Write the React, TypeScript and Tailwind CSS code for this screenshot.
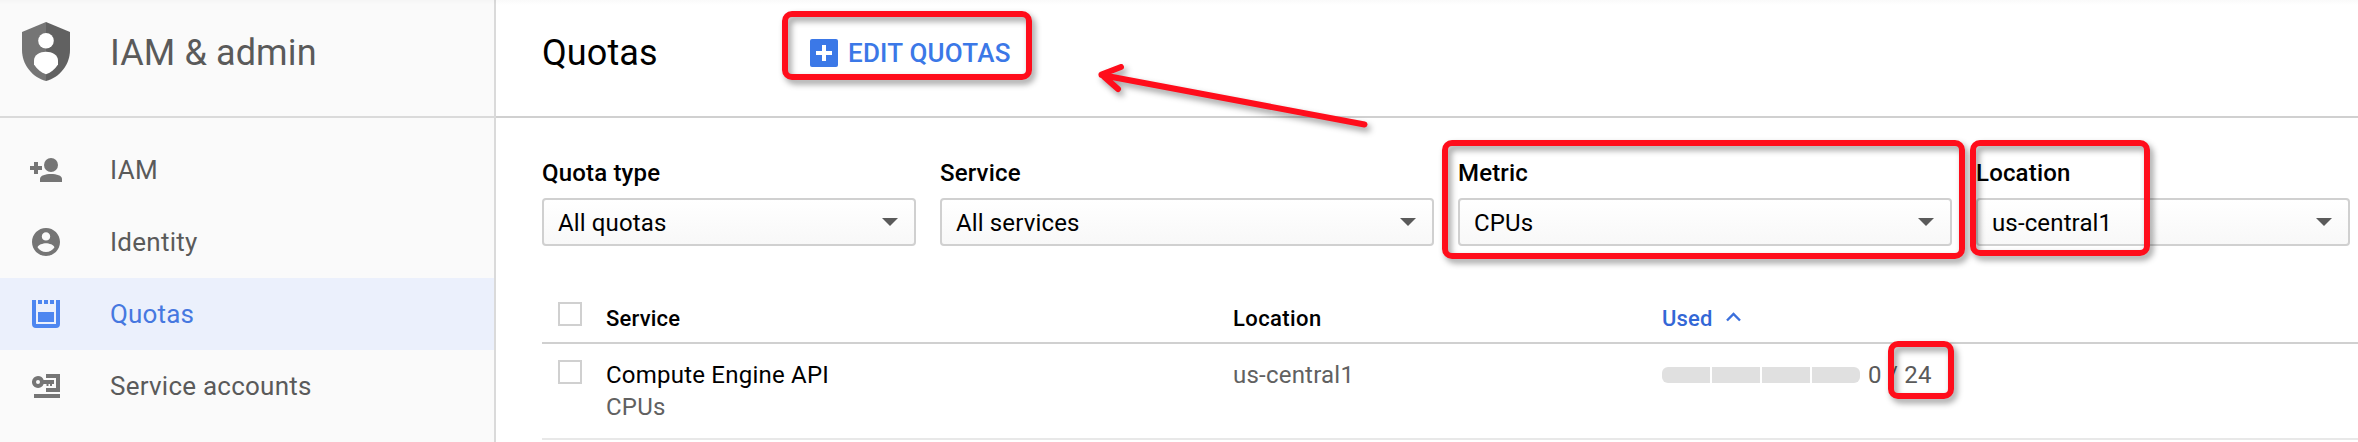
import React from "react";
import type { ReactNode } from "react";

function ShieldIcon() {
  return (
    <svg width="48" height="59" viewBox="0 0 48 59">
      <path d="M24 0 0 10V28C0 42.500 10.200 55.400 24 59Z" fill="#757575" />
      <path d="M24 0 48 10V28C48 42.500 37.800 55.400 24 59Z" fill="#616161" />
      <circle cx="24" cy="18.700" r="7.800" fill="#fff" />
      <path d="M24 29.700C18 29.700 12 32.500 12 38.500V42.500C15 47 19 50.500 24 52.300C29 50.500 33 47 36 42.500V38.500C36 32.500 30 29.700 24 29.700Z" fill="#fff" />
    </svg>
  );
}

function PersonAddIcon() {
  return (
    <svg width="32" height="24" viewBox="0 0 32 24" fill="#757575">
      <path d="M4 4H8V8H12V12H8V16H4V12H0V8H4Z" />
      <circle cx="21" cy="7" r="7" />
      <path d="M10 24V21C10 17.400 15.500 16 21 16S32 17.400 32 21V24Z" />
    </svg>
  );
}

function AccountIcon() {
  return (
    <svg width="28" height="28" viewBox="2 2 20 20" fill="#757575">
      <path d="M12 2C6.480 2 2 6.480 2 12s4.480 10 10 10 10-4.480 10-10S17.520 2 12 2zm0 3c1.660 0 3 1.340 3 3s-1.340 3-3 3-3-1.340-3-3 1.340-3 3-3zm0 14.200c-2.500 0-4.710-1.280-6-3.220.03-1.990 4-3.080 6-3.080 1.990 0 5.970 1.090 6 3.080-1.290 1.940-3.500 3.220-6 3.220z" />
    </svg>
  );
}

function QuotaIcon() {
  return (
    <svg width="28" height="28" viewBox="0 0 28 28" fill="#4d86f0">
      <path d="M0 0H4V24H24V0H28V24A4 4 0 0 1 24 28H4A4 4 0 0 1 0 24Z" />
      <path d="M6 0h4v4H6zM12 0h4v4h-4zM18 0h4v4h-4zM6 12h16v10H6z" />
    </svg>
  );
}

function ServiceAccountIcon() {
  return (
    <svg width="28" height="24" viewBox="0 0 28 24" fill="#757575">
      <path d="M14 0H28V18H14V14H24V4H14Z" />
      <path d="M2 20H28V24H2Z" />
      <path
        fillRule="evenodd"
        d="M6 2A6 6 0 0 1 11.650 6H22V10H20V12H18V10H16.500V12H14.500V10H11.650A6 6 0 1 1 6 2ZM6 6A2 2 0 1 0 6 10A2 2 0 1 0 6 6Z"
      />
    </svg>
  );
}

function NavItem({ icon, label, active, spacing }: { icon: ReactNode; label: string; active?: boolean; spacing: string }) {
  return (
    <li className={`flex h-[72px] items-center ${active ? "bg-[#ebf0fc] text-[#4678e0]" : "text-[#5a5a5a]"}`}>
      <span className="flex w-[92px] shrink-0 justify-center">{icon}</span>
      <span className={`ml-[18px] text-[26px] leading-[30px] whitespace-nowrap ${spacing}`}>{label}</span>
    </li>
  );
}

function Filter({ label, value, width, children }: { label: string; value: string; width: string; children?: ReactNode }) {
  return (
    <div className={`relative shrink-0 ${width}`}>
      <div className="text-[24px] leading-[28px] font-medium tracking-[0.17px]">{label}</div>
      <div className="mt-[11px] flex h-12 items-center justify-between rounded-[4px] border-2 border-[#d0d0d0] bg-linear-to-b from-white to-[#f8f8f8] pr-4 pl-[14px]">
        <span className="pt-[2px] text-[24px] leading-[28px] tracking-[0.14px]">{value}</span>
        <svg width="16" height="8" viewBox="0 0 16 8">
          <path d="M0 0H16L8 8Z" fill="#5a5a5a" />
        </svg>
      </div>
      {children}
    </div>
  );
}

function Checkbox() {
  return <span className="block size-6 border-2 border-[#d0d0d0] bg-white" />;
}

function Highlight({ place }: { place: string }) {
  return (
    <div
      className={`pointer-events-none absolute z-10 rounded-[10px] border-6 border-[#ff0d1b] drop-shadow-[3px_4px_3px_rgba(0,0,0,0.4)] ${place}`}
    />
  );
}

export default function App() {
  return (
    <div className="relative flex h-[442px] w-[2358px] overflow-hidden bg-white font-[Roboto,sans-serif] text-black">
      <aside className="w-[496px] shrink-0 border-r-2 border-[#dadada] bg-[#fafafa]">
        <div className="flex h-[118px] items-center border-b-2 border-[#dadada] pb-[10px] text-[#5a5a5a]">
          <span className="-mt-[3px] flex w-[92px] shrink-0 justify-center">
            <ShieldIcon />
          </span>
          <span className="ml-[18px] text-[36px] leading-[42px] tracking-[0.12px]">IAM &amp; admin</span>
        </div>
        <ul className="pt-4">
          <NavItem icon={<PersonAddIcon />} label="IAM" spacing="tracking-[0.4px]" />
          <NavItem icon={<AccountIcon />} label="Identity" spacing="tracking-[0.25px]" />
          <NavItem icon={<QuotaIcon />} label="Quotas" active spacing="tracking-[0.16px]" />
          <NavItem icon={<ServiceAccountIcon />} label="Service accounts" spacing="tracking-[0.24px]" />
        </ul>
      </aside>

      <main className="min-w-0 flex-1">
        <header className="flex h-[118px] items-center border-b-2 border-[#d0d0d0] pb-[10px] pl-[46px]">
          <h1 className="w-[268px] text-[36px] leading-[42px] tracking-[0.1px]">Quotas</h1>
          <div className="flex items-center text-[#3b78e7]">
            <svg width="28" height="28" viewBox="0 0 28 28">
              <rect width="28" height="28" rx="2" fill="#3b78e7" />
              <path d="M12 6h4v6h6v4h-6v6h-4v-6H6v-4h6z" fill="#fff" />
            </svg>
            <span className="ml-[10px] text-[26px] leading-[30px] font-medium tracking-[0.22px]">EDIT QUOTAS</span>
          </div>
        </header>

        <section className="flex gap-6 pt-[41px] pl-[46px]">
          <Filter label="Quota type" value="All quotas" width="w-[374px]" />
          <Filter label="Service" value="All services" width="w-[494px]" />
          <Filter label="Metric" value="CPUs" width="w-[494px]">
            <Highlight place="-top-[19px] -left-4 h-[119px] w-[523px]" />
          </Filter>
          <Filter label="Location" value="us-central1" width="w-[374px]">
            <Highlight place="-top-[19px] -left-[6px] h-[116px] w-[180px]" />
          </Filter>
        </section>

        <section className="mt-[46px] ml-[46px]">
          <div className="grid h-[52px] grid-cols-[64px_627px_429px_1fr] border-b-2 border-[#d0d0d0] text-[22px] leading-[26px] font-medium tracking-[0.2px]">
            <span className="pt-[10px] pl-4">
              <Checkbox />
            </span>
            <span className="pt-[14px]">Service</span>
            <span className="pt-[14px] tracking-[0.4px]">Location</span>
            <span className="flex items-start pt-[14px] text-[#3367d6]">
              Used
              <svg className="mt-[6px] ml-[13px]" width="15" height="10" viewBox="0 0 15 10">
                <path d="M1 8.500 7.500 2 14 8.500" fill="none" stroke="#3b6fdc" strokeWidth="2.400" />
              </svg>
            </span>
          </div>
          <div className="grid h-24 grid-cols-[64px_627px_429px_1fr] border-b-2 border-[#e8e8e8] text-[24px] leading-8 tracking-[0.22px]">
            <span className="pt-4 pl-4">
              <Checkbox />
            </span>
            <div className="pt-[15px]">
              <div>Compute Engine API</div>
              <div className="text-[#616161]">CPUs</div>
            </div>
            <span className="pt-[15px] text-[#616161]">us-central1</span>
            <div className="flex items-start pt-[15px] text-[#5a5a5a]">
              <div className="mt-2 flex h-4 w-[198px] gap-[2px] overflow-hidden rounded-[6px]">
                <i className="flex-1 bg-[#e0e0e0]" />
                <i className="flex-1 bg-[#e0e0e0]" />
                <i className="flex-1 bg-[#e0e0e0]" />
                <i className="flex-1 bg-[#e0e0e0]" />
              </div>
              <span className="relative ml-2">
                0 / 24
                <Highlight place="-top-[18px] left-5 h-[58px] w-[66px]" />
              </span>
            </div>
          </div>
        </section>
      </main>

      <div className="pointer-events-none absolute inset-x-0 top-0 h-[5px] bg-linear-to-b from-black/2 to-transparent" />
      <Highlight place="top-[10.500px] left-[781.500px] h-[69px] w-[250.500px]" />
      <svg
        className="pointer-events-none absolute top-[50px] left-[1090px] drop-shadow-[3px_4px_3px_rgba(0,0,0,0.4)]"
        width="290"
        height="90"
        viewBox="0 0 290 90"
        fill="none"
        stroke="#ff0d1b"
        strokeWidth="6"
        strokeLinecap="round"
        strokeLinejoin="round"
      >
        <path d="M11.500 25 274.500 74.500M31 17 11.500 24.500 28 39" />
      </svg>
    </div>
  );
}
